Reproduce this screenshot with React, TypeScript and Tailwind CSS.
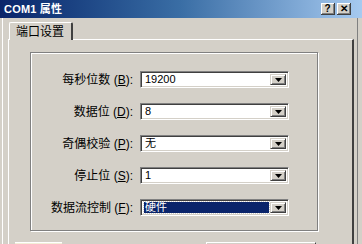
import React from "react";

const rows = [
  { label: "每秒位数", key: "B", value: "19200" },
  { label: "数据位", key: "D", value: "8" },
  { label: "奇偶校验", key: "P", value: "无" },
  { label: "停止位", key: "S", value: "1" },
  { label: "数据流控制", key: "F", value: "硬件", selected: true },
];

const font = { fontFamily: '"Liberation Sans", "Noto Sans CJK SC", sans-serif' };

function DropButton() {
  return (
    <div className="w-[16px] h-full bg-[#d4d0c8] border-t border-l border-t-[#d4d0c8] border-l-[#d4d0c8] border-b border-r border-b-[#404040] border-r-[#404040] shadow-[inset_1px_1px_0_#fff,inset_-1px_-1px_0_#808080] flex items-center justify-center shrink-0">
      <svg width="7" height="4" viewBox="0 0 7 4">
        <path d="M0 0h7L3.5 4z" fill="#000" />
      </svg>
    </div>
  );
}

function Combo({ value, selected }: { value: string; selected?: boolean }) {
  return (
    <div className="w-[149px] h-[17px] flex bg-white border-t border-l border-t-[#808080] border-l-[#808080] border-b border-r border-b-white border-r-white shadow-[inset_1px_1px_0_#404040,inset_-1px_-1px_0_#d4d0c8] p-[2px]">
      <div className="flex-1 flex items-center pl-[1px] pr-[1px]">
        {selected ? (
          <div className="w-full h-full bg-[#0a246a] outline outline-1 outline-dotted outline-[#d4d0c8] flex items-center pl-[1px] text-white text-[11px] leading-none">
            {value}
          </div>
        ) : (
          <span className="text-[11px] leading-none text-black pl-[1px]">{value}</span>
        )}
      </div>
      <DropButton />
    </div>
  );
}

function TitleButton({ children }: { children: React.ReactNode }) {
  return (
    <div className="w-[14px] h-[12px] bg-[#d4d0c8] border-b border-r border-b-[#404040] border-r-[#404040] shadow-[inset_1px_1px_0_#fff,inset_-1px_-1px_0_#808080] flex items-center justify-center text-[10px] font-bold leading-none text-black">
      {children}
    </div>
  );
}

export default function App() {
  return (
    <div className="w-[362px] h-[244px] overflow-hidden bg-[#d4d0c8] flex flex-col" style={font}>
      {/* title bar */}
      <div className="h-[18px] shrink-0 bg-gradient-to-r from-[#0a246a] via-[#3a6ea5] to-[#a6caf0] flex items-center pl-[4px] pr-[11px]">
        <span className="text-white font-bold text-[11px] leading-none tracking-[0.2px]">COM1 属性</span>
        <div className="ml-auto flex gap-[2px]">
          <TitleButton>?</TitleButton>
          <TitleButton>✕</TitleButton>
        </div>
      </div>

      {/* dialog body */}
      <div className="flex-1 ml-[2px] mr-[4px] border-l border-l-white border-r border-r-[#808080] pl-[5px] pr-[3px] pt-[4px] flex flex-col">
        {/* tab strip */}
        <div className="flex">
          <div className="ml-[1px] h-[18px] w-[64px] border-t border-l border-t-white border-l-white border-r-2 border-r-[#404040] rounded-t-[2px] flex items-center pl-[6px] text-[12px] leading-none text-black relative z-10 bg-[#d4d0c8] -mb-px">
            端口设置
          </div>
        </div>

        {/* tab panel */}
        <div className="flex-1 border-t border-l border-t-white border-l-white border-r-2 border-r-[#404040] pl-[21px] pr-[34px] pt-[12px] flex flex-col">
          <div className="border border-[#808080] shadow-[1px_1px_0_#fff,inset_1px_1px_0_#fff] pt-[18px] pb-[14px] flex flex-col gap-[15px]">
            {rows.map((r) => (
              <div key={r.key} className="flex items-center h-[17px]">
                <div className="w-[102px] text-right text-[12px] leading-none text-black whitespace-nowrap">
                  {r.label} (<span className="underline">{r.key}</span>):
                </div>
                <div className="ml-[7px]">
                  <Combo value={r.value} selected={r.selected} />
                </div>
              </div>
            ))}
          </div>

          <div className="flex mt-[11px] -ml-[15px]">
            <div className="w-[47px] h-[20px] bg-[#f2efd8] border-t border-t-white" />
            <div className="ml-[144px] w-[110px] h-[20px] border-t border-l border-t-white border-l-white border-r border-r-[#404040]" />
          </div>
        </div>
      </div>
    </div>
  );
}
